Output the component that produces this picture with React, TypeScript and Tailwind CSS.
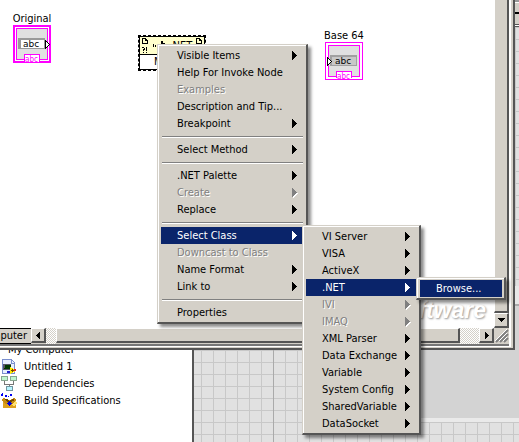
import React from "react";

type Item = { label: string; sub?: boolean; disabled?: boolean; active?: boolean } | null;

const nodeMenu: Item[] = [
  { label: "Visible Items", sub: true },
  { label: "Help For Invoke Node" },
  { label: "Examples", disabled: true },
  { label: "Description and Tip..." },
  { label: "Breakpoint", sub: true },
  null,
  { label: "Select Method", sub: true },
  null,
  { label: ".NET Palette", sub: true },
  { label: "Create", sub: true, disabled: true },
  { label: "Replace", sub: true },
  null,
  { label: "Select Class", sub: true, active: true },
  { label: "Downcast to Class", disabled: true },
  { label: "Name Format", sub: true },
  { label: "Link to", sub: true },
  null,
  { label: "Properties" },
];

const classMenu: Item[] = [
  { label: "VI Server", sub: true },
  { label: "VISA", sub: true },
  { label: "ActiveX", sub: true },
  { label: ".NET", sub: true, active: true },
  { label: "IVI", sub: true, disabled: true },
  { label: "IMAQ", sub: true, disabled: true },
  { label: "XML Parser", sub: true },
  { label: "Data Exchange", sub: true },
  { label: "Variable", sub: true },
  { label: "System Config", sub: true },
  { label: "SharedVariable", sub: true },
  { label: "DataSocket", sub: true },
];

function Arrow({ disabled }: { disabled?: boolean }) {
  return (
    <svg width="6" height="10" viewBox="0 0 6 10" shapeRendering="crispEdges" aria-hidden="true">
      {disabled && <path d="M1 1h1v1h1v1h1v1h1v1h1v1h-1v1h-1v1h-1v1h-1v1h-1z" fill="#fff" />}
      <path d="M0 0h1v1h1v1h1v1h1v1h1v1h-1v1h-1v1h-1v1h-1v1h-1z" fill="currentColor" />
    </svg>
  );
}

function Menu({ items, place, label }: { items: Item[]; place: string; label: string }) {
  return (
    <div
      role="menu"
      aria-label={label}
      className={`absolute border-t border-l border-r-2 border-b-2 border-t-[#d4d0c8] border-l-[#d4d0c8] border-r-[#555] border-b-[#555] bg-[#d4d0c8] shadow-[3px_3px_3px_rgba(0,0,0,0.45)] ${place}`}
    >
      <div className="border-t border-l border-white px-[2px] pt-px pb-px">
        {items.map((item, i) =>
          item === null ? (
            <div key={i} role="separator" className="mx-px flex h-[9px] flex-col justify-center">
              <div className="h-px bg-[#808080]" />
              <div className="h-px bg-white" />
            </div>
          ) : (
            <button
              key={i}
              role="menuitem"
              disabled={item.disabled}
              className={`flex h-[17px] w-full items-center justify-between pr-1.5 pl-4 text-left whitespace-nowrap ${
                item.active
                  ? "bg-[#0a246a] text-white"
                  : item.disabled
                    ? "text-[#808080] [text-shadow:1px_1px_0_#fff]"
                    : "text-black"
              }`}
            >
              <span>{item.label}</span>
              {item.sub && <Arrow disabled={item.disabled} />}
            </button>
          ),
        )}
      </div>
    </div>
  );
}

function Terminal({ output }: { output?: boolean }) {
  return (
    <svg width="38" height="38" viewBox="0 0 38 38" shapeRendering="crispEdges" aria-hidden="true">
      <rect width="38" height="38" fill="#ff00ff" />
      {output ? (
        <>
          <rect x="1" y="1" width="36" height="36" fill="#fff" />
          <rect x="3" y="3" width="32" height="32" fill="#ff00ff" />
        </>
      ) : (
        <>
          <rect x="2" y="2" width="34" height="34" fill="#fff" />
          <rect x="3" y="3" width="32" height="32" fill="#ff00ff" />
        </>
      )}
      <rect x="4" y="4" width="30" height="30" fill="#e0e0e0" />
      {output ? (
        <>
          <rect x="5" y="13" width="27" height="11" fill="#a0a0a0" />
          <rect x="7" y="15" width="24" height="8" fill="#c8c8c8" />
          <path d="M2 15v9h1v-1h1v-1h1v-1h1v-1h1v-1h-1v-1h-1v-1h-1v-1h-1v-1z" fill="#000" />
          <path d="M3 17v5h1v-1h1v-1h1v-1h-1v-1h-1v-1z" fill="#fff" />
        </>
      ) : (
        <>
          <rect x="5" y="13" width="27" height="11" fill="#999" />
          <rect x="8" y="15" width="23" height="8" fill="#fff" />
          <path d="M32 15v9h1v-1h1v-1h1v-1h1v-1h1v-1h-1v-1h-1v-1h-1v-1h-1v-1z" fill="#000" />
          <path d="M33 17v5h1v-1h1v-1h1v-1h-1v-1h-1v-1z" fill="#fff" />
        </>
      )}
      <rect x="11" y="29" width="16" height="7" fill="#ff00ff" />
      <rect x="12" y="30" width="14" height="7" fill="#fff" />
      <text x="10" y="22" fontSize="9" fill="#000" fontFamily="DejaVu Sans, sans-serif">
        abc
      </text>
      <text x="12" y="37" fontSize="8" fill="#ff00ff" fontFamily="DejaVu Sans Condensed, sans-serif">
        abc
      </text>
    </svg>
  );
}

function PageGlyph({ bang }: { bang?: boolean }) {
  return (
    <svg width="6" height="15" viewBox="0 0 6 15" shapeRendering="crispEdges" aria-hidden="true">
      <path d="M0 0h4v1h1v1h1v4h-6zM1 1v4h4v-2h-2v-2z" fill="#000" fillRule="evenodd" />
      {bang && <path d="M0 9h2v1h1v2h-1v1h-1v-2h1v-1h-2zM1 14h1v1h-1zM4 9h1v4h-1zM4 14h1v1h-1z" fill="#000" />}
    </svg>
  );
}

function InvokeNode() {
  return (
    <div className="absolute top-[35px] left-[138px] w-[68px] border border-dashed border-black text-[11px] leading-3">
      <div className="flex h-[34px] flex-col border border-black bg-white">
        <div className="flex h-[18px] shrink-0 justify-between border-b border-black bg-[#ffffcc] px-0.5 pt-px">
          <PageGlyph bang />
          <svg width="14" height="12" viewBox="0 0 14 12" shapeRendering="crispEdges" aria-hidden="true">
            <path d="M1 6h1v3h-1zM3 7h1v2h-1zM5 7h1v2h-1zM7 6h2v1h-2zM9 3h2v2h2v2h-2v2h-2zM7 7h1v2h-1z" fill="#000" />
          </svg>
          <span className="pt-0.5">.NET</span>
          <PageGlyph />
        </div>
        <div className="pt-px pl-3.5">Method</div>
      </div>
    </div>
  );
}

function ScrollButton({ dir, label }: { dir: "left" | "right" | "down"; label: string }) {
  const shape = {
    left: "M6 3h1v7h-1v-1h-1v-1h-1v-1h-1v-1h1v-1h1v-1h1z",
    right: "M4 3h1v1h1v1h1v1h1v1h-1v1h-1v1h-1v1h-1z",
    down: "M2 4h7v1h-1v1h-1v1h-1v1h-1v-1h-1v-1h-1v-1h-1z",
  }[dir];
  return (
    <button
      aria-label={label}
      className="flex h-[15px] w-[15px] shrink-0 items-center justify-center border-t border-l border-r-2 border-b-2 border-t-white border-l-white border-r-[#555] border-b-[#555] bg-[#d4d0c8]"
    >
      <svg width="11" height="12" viewBox="0 0 11 12" shapeRendering="crispEdges" aria-hidden="true">
        <path d={shape} fill="#000" />
      </svg>
    </button>
  );
}

const checker = "bg-[repeating-conic-gradient(#ffffff_0_25%,#d4d0c8_0_50%)] bg-[length:2px_2px]";
const grid =
  "bg-[#e1e1e1] bg-[linear-gradient(to_right,#c8c8c8_1px,transparent_1px),linear-gradient(to_bottom,#c8c8c8_1px,transparent_1px)] bg-[length:12px_12px]";

function ViIcon() {
  return (
    <svg width="16" height="16" viewBox="0 0 16 16" shapeRendering="crispEdges" aria-hidden="true">
      <path d="M1.5 .5h9l3 3v11h-12z" fill="#e8f0ff" stroke="#7b8fce" />
      <path d="M10 1v3h3" fill="none" stroke="#7b8fce" />
      <rect x="2" y="5" width="8" height="6" fill="#556" />
      <path d="M3 9h1V6h1v3h1V6h1v3h1V6h1v3" fill="none" stroke="#003800" />
      <path d="M6 12h3v2H6z" fill="#2222cc" />
      <path d="M9 8h1v1h2v1h2v3h-2v1h-2v1H9z" fill="#ffe800" />
      <path d="M13 10h2v2h-2z" fill="#f02020" />
      <path d="M10 11h3v1h-3zM11 10h1v3h-1z" fill="#704000" />
    </svg>
  );
}

function DependenciesIcon() {
  return (
    <svg width="16" height="16" viewBox="0 0 16 16" shapeRendering="crispEdges" aria-hidden="true">
      <path d="M3.500 5v3h9V5M8.500 8v4" fill="none" stroke="#777" />
      <rect x="0.5" y="0.5" width="6" height="4" fill="#bff5cf" stroke="#87a690" />
      <rect x="9.5" y="0.5" width="6" height="4" fill="#bff5cf" stroke="#87a690" />
      <rect x="5.5" y="10.5" width="6" height="4" fill="#b8f4ff" stroke="#72959f" />
    </svg>
  );
}

function BuildIcon() {
  return (
    <svg width="16" height="17" viewBox="0 0 16 17" shapeRendering="crispEdges" aria-hidden="true">
      <path d="M0 2h2v2H0zM4 3h2v2H4zM9 2h2v2H9zM1 1h1v1H1zM7 4h1v1H7z" fill="#0000f0" />
      <path d="M2 8h13v8H2z" fill="#dca020" />
      <path d="M0 8l3-2 5 3-3 3zM16 8l-3-2-5 3 3 3z" fill="#c78b10" />
      <path d="M3 7h4l1 2 4-2 2 1-6 3z" fill="#704800" />
      <path d="M11 13l3-4 2 2-3 4z" fill="#ffe070" />
      <path d="M8 9h1v1h1v1h1v1h-1v1H9v1H8v-1H7v-1H6v-1h1v-1h1z" fill="#0000dd" />
    </svg>
  );
}

const project = [
  { label: "Untitled 1", icon: <ViIcon /> },
  { label: "Dependencies", icon: <DependenciesIcon /> },
  { label: "Build Specifications", icon: <BuildIcon /> },
];

export default function App() {
  return (
    <div className="relative flex h-screen w-full flex-col overflow-hidden bg-[#d3d3d3] font-['DejaVu_Sans_Condensed','DejaVu_Sans',sans-serif] text-[11px] leading-[17px] text-black">
      {/* Block diagram window */}
      <div className="flex h-[350px] shrink-0">
        <main className="flex min-w-0 flex-1 flex-col border-r-2 border-b-2 border-[#555] bg-[#d4d0c8]">
          <div className="mr-0.5 mb-px flex min-h-0 flex-1 flex-col border-r-2 border-b border-white">
            <div className="flex min-h-0 flex-1">
              <section aria-label="Block diagram" className="relative min-w-0 flex-1 overflow-hidden bg-white">
                <div className="absolute top-2.5 left-[13px] flex w-[38px] flex-col items-center">
                  <span className="h-[15px]">Original</span>
                  <Terminal />
                </div>
                <div className="absolute top-[27px] left-[325px] flex w-[38px] flex-col items-center whitespace-nowrap">
                  <span className="h-[15px]">Base 64</span>
                  <Terminal output />
                </div>
                <InvokeNode />
                <div className="absolute right-2 bottom-1 font-['Liberation_Sans',sans-serif] text-[23px] leading-7 font-bold text-white italic [text-shadow:1px_1px_2px_#999]">
                  Software
                </div>
              </section>
              <div className={`flex w-[15px] shrink-0 flex-col ${checker}`}>
                <div className="flex-1 border-r-2 border-b-2 border-l border-r-[#555] border-b-[#555] border-l-white bg-[#d4d0c8]" />
                <ScrollButton dir="down" label="Scroll down" />
              </div>
            </div>
            <div className="flex h-4 shrink-0">
              <div className="flex w-[31px] justify-end overflow-hidden border-t border-b border-black pr-1 leading-[14px] whitespace-nowrap">
                My Computer
              </div>
              <ScrollButton dir="left" label="Scroll left" />
              <div className={`w-2.5 ${checker}`} />
              <div className="h-[15px] flex-1 border-t border-l border-r-2 border-b-2 border-t-white border-l-white border-r-[#555] border-b-[#555]" />
              <div className={`w-[19px] ${checker}`} />
              <ScrollButton dir="right" label="Scroll right" />
              <svg width="15" height="16" viewBox="0 0 15 16" aria-hidden="true">
                <path d="M2 14L14 2M6 14l8-8M10 14l4-4" stroke="#808080" strokeWidth="2" />
                <path d="M1 13L13 1M5 13l8-8M9 13l4-4" stroke="#fff" />
              </svg>
            </div>
            <div className="h-0.5 shrink-0 bg-[#777]" />
          </div>
        </main>
        <div className="flex w-1 shrink-0 flex-col">
          <div className="h-[3px] border-b border-white bg-[#999]" />
          <div className="flex h-[21px] flex-col bg-[#d4d0c8] pt-[9px]">
            <div className="h-0.5 bg-black" />
          </div>
          <div className="h-[3px] border-t border-b border-[#555] bg-white" />
          <div className={`flex-1 ${grid}`} />
          <div className="h-5 border-b-2 border-[#aaa] bg-[#e8e8e8]" />
          <div className="h-11 bg-[#d3d3d3]" />
        </div>
      </div>

      {/* Project explorer and front panel behind it */}
      <div className="flex min-h-0 flex-1">
        <aside className="w-[194px] shrink-0 overflow-hidden border-r-2 border-[#555] bg-white">
          <div className="-mt-[9px] h-[17px] pl-2">My Computer</div>
          <ul>
            {project.map((p) => (
              <li key={p.label} className="flex h-[17px] items-center gap-[7px] pl-px">
                {p.icon}
                <span>{p.label}</span>
              </li>
            ))}
          </ul>
        </aside>
        <div className={`w-[226px] shrink-0 bg-[position:7px_0] ${grid}`}>
          <div className="ml-[79px] h-full w-px bg-[#aaa]" />
        </div>
        <div className="flex min-w-0 flex-1 flex-col">
          <div className="flex-1" />
          <div className={`h-6 border-t-4 border-[#eaeaea] bg-[position:9px_0] ${grid}`} />
        </div>
      </div>

      <Menu items={nodeMenu} place="top-[44px] left-[157px] w-[151px]" label="Node" />
      <Menu items={classMenu} place="top-[225px] left-[302px] w-[119px]" label="Select Class" />
      <Menu items={[{ label: "Browse...", active: true }]} place="top-[277px] left-[416px] w-[90px]" label=".NET" />
    </div>
  );
}
